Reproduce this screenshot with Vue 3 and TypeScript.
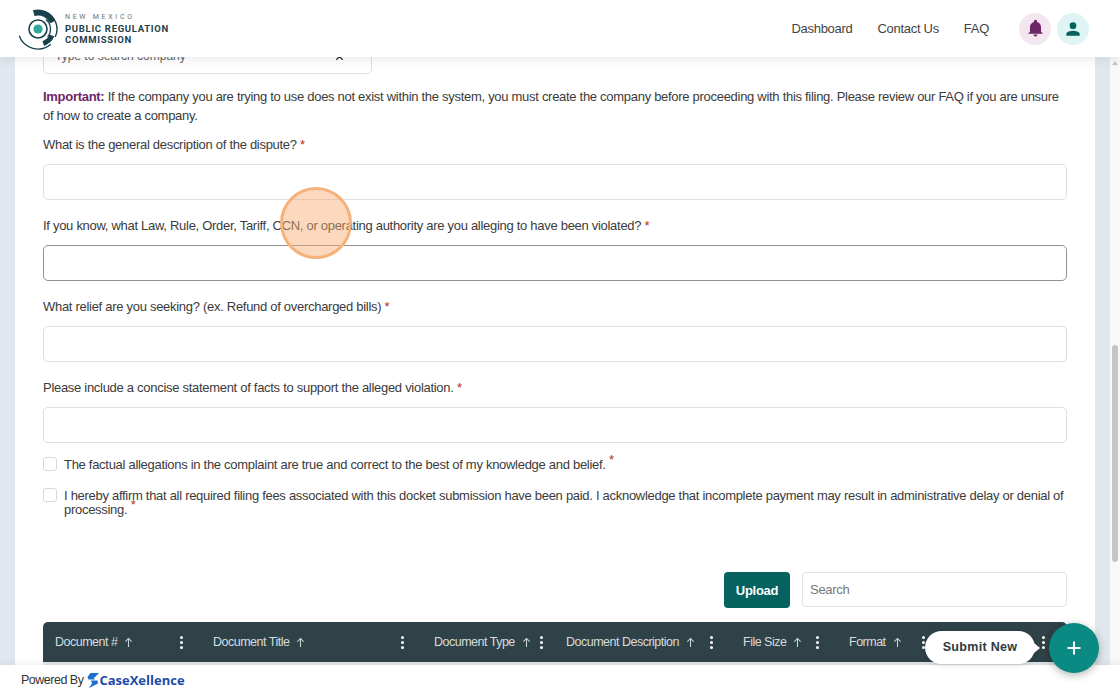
<template>
  <div class="shell">
    <header class="topbar">
      <div class="brand">
        <svg class="brand-mark" viewBox="0 0 44 44" width="44" height="44" fill="none" stroke="#17414b">
          <path d="M15.730 6.060A16.500 16.500 0 0 1 34.950 15.030" stroke-width="6" />
          <path d="M37.200 14A19 19 0 0 1 37.200 30" stroke-width="1.400" />
          <path d="M34.050 28.550A15.500 15.500 0 0 1 25.300 36.570" stroke-width="5" />
          <path d="M1.200 28.840A20 20 0 0 0 32.860 37.320" stroke-width="1.300" />
          <path d="M28 12.400A12.500 12.500 0 0 1 29.600 30" stroke-width="1.300" />
          <circle cx="20" cy="22" r="9" stroke-width="1.600" />
          <circle cx="20" cy="22" r="4.600" fill="#2fa89e" stroke="none" />
        </svg>
        <div class="brand-text">
          <span class="brand-state">NEW MEXICO</span>
          <span class="brand-name">PUBLIC REGULATION</span>
          <span class="brand-name">COMMISSION</span>
        </div>
      </div>
      <nav class="nav">
        <a v-for="link in navLinks" :key="link">{{ link }}</a>
      </nav>
      <div class="avatars">
        <span class="avatar bell">
          <svg viewBox="0 0 24 24" width="19" height="19" fill="#6d2667">
            <path d="M12 22a2.500 2.500 0 0 0 2.500-2.500h-5A2.500 2.500 0 0 0 12 22Zm7-6v-5.500c0-3.300-1.800-6-5-6.700V3a2 2 0 0 0-4 0v.8c-3.200.7-5 3.400-5 6.700V16l-2 2v.5h18V18Z" />
          </svg>
        </span>
        <span class="avatar user">
          <svg viewBox="0 0 24 24" width="20" height="20" fill="#05625f">
            <circle cx="12" cy="8" r="4" />
            <path d="M4 20v-2c0-2.700 5.300-4 8-4s8 1.300 8 4v2Z" />
          </svg>
        </span>
      </div>
    </header>

    <div class="body">
      <main class="page">
        <div class="card">
          <div class="company-select">
            <span>Type to search company</span>
            <svg viewBox="0 0 10 10" width="9" height="9" stroke="#333" stroke-width="1.500">
              <path d="M1.500 1.500l7 7M8.500 1.500l-7 7" />
            </svg>
          </div>

          <p class="notice">
            <strong>Important:</strong> If the company you are trying to use does not exist within the system, you must create the company before proceeding with this filing. Please review our FAQ if you are unsure of how to create a company.
          </p>

          <div v-for="field in fields" :key="field.label" class="field">
            <label>{{ field.label }} <em>*</em></label>
            <div class="text-input" :class="{ active: field.active }"></div>
          </div>

          <div class="check first">
            <span class="box"></span>
            <span>The factual allegations in the complaint are true and correct to the best of my knowledge and belief. <sup>*</sup></span>
          </div>
          <div class="check">
            <span class="box"></span>
            <span>I hereby affirm that all required filing fees associated with this docket submission have been paid. I acknowledge that incomplete payment may result in administrative delay or denial of processing. <sup>*</sup></span>
          </div>

          <div class="toolbar">
            <button class="upload">Upload</button>
            <div class="search">Search</div>
          </div>

          <div class="table-head">
            <div v-for="col in columns" :key="col.name" class="col" :class="col.cls">
              <span class="col-name">{{ col.name }}</span>
              <svg v-if="col.name" class="arrow" viewBox="0 0 10 12" width="9" height="11" fill="none" stroke="#c9d2d4" stroke-width="1.200">
                <path d="M5 11V1.500M1.500 5L5 1.500L8.500 5" />
              </svg>
              <span class="dots"><i></i><i></i><i></i></span>
            </div>
          </div>
          <div class="table-rows"></div>
        </div>
      </main>
      <div class="scrollbar">
        <span class="up"></span>
        <span class="thumb"></span>
        <span class="down"></span>
      </div>
    </div>

    <footer class="footer">
      <span>Powered By</span>
      <svg viewBox="0 0 12 15" width="12" height="15" fill="#1b6fd0">
        <path d="M3.500 0H12L7.500 4.500H6.500L8 6.500H1.500L0.500 4Z" />
        <path d="M4 7.500H10.500L11 10.500L2 15L5 10.500Z" />
      </svg>
      <strong>CaseXellence</strong>
    </footer>

    <div class="click-mark"></div>
    <div class="submit-tip">Submit New</div>
    <button class="fab">
      <svg viewBox="0 0 16 16" width="16" height="16" stroke="#fff" stroke-width="2">
        <path d="M8 1.500v13M1.500 8h13" />
      </svg>
    </button>
  </div>
</template>

<script setup lang="ts">
interface Field {
  label: string
  active?: boolean
}

interface Column {
  name: string
  cls?: string
}

const navLinks = ['Dashboard', 'Contact Us', 'FAQ']

const fields: Field[] = [
  { label: 'What is the general description of the dispute?' },
  { label: 'If you know, what Law, Rule, Order, Tariff, CCN, or operating authority are you alleging to have been violated?', active: true },
  { label: 'What relief are you seeking? (ex. Refund of overcharged bills)' },
  { label: 'Please include a concise statement of facts to support the alleged violation.' }
]

const columns: Column[] = [
  { name: 'Document #' },
  { name: 'Document Title' },
  { name: 'Document Type', cls: 'tight' },
  { name: 'Document Description' },
  { name: 'File Size' },
  { name: 'Format' },
  { name: '' }
]
</script>

<style>
html,
body {
  margin: 0;
  height: 100%;
  overflow: hidden;
}
</style>

<style scoped>
.shell {
  position: relative;
  display: flex;
  flex-direction: column;
  width: 1120px;
  height: 694px;
  overflow: hidden;
  background: #fff;
  font-family: "Liberation Sans", Arial, sans-serif;
  font-size: 13px;
  letter-spacing: -0.29px;
  color: #3b3b3b;
}

.topbar {
  position: relative;
  z-index: 3;
  flex: 0 0 57px;
  display: flex;
  align-items: center;
  padding: 0 31px 0 18px;
  background: #fff;
  box-shadow: 0 2px 10px rgba(40, 50, 70, 0.1);
}

.brand {
  display: flex;
  align-items: center;
  gap: 3px;
}

.brand-mark {
  margin-top: 1px;
}

.brand-text {
  display: flex;
  flex-direction: column;
  font-family: Roboto, sans-serif;
  line-height: 11px;
  letter-spacing: 0;
}

.brand-state {
  font-size: 7px;
  letter-spacing: 2.700px;
  color: #6a7377;
}

.brand-name {
  font-size: 9.500px;
  font-weight: 700;
  letter-spacing: 0.700px;
  color: #1d4049;
}

.nav {
  display: flex;
  gap: 25px;
  margin-left: auto;
  color: #444;
}

.avatars {
  display: flex;
  gap: 6px;
  margin-left: 30px;
}

.avatar {
  display: flex;
  align-items: center;
  justify-content: center;
  width: 32px;
  height: 32px;
  border-radius: 50%;
}

.bell {
  background: #f3e6f1;
}

.user {
  background: #dff5f5;
}

.body {
  flex: 1;
  display: flex;
  min-height: 0;
}

.page {
  flex: 1;
  min-width: 0;
  padding: 0 15px;
  background: #e2e7ef;
  overflow: hidden;
}

.card {
  height: calc(100% + 19px);
  margin-top: -19px;
  padding: 0 28px;
  background: #fff;
}

.company-select {
  display: flex;
  align-items: center;
  justify-content: space-between;
  box-sizing: border-box;
  width: 329px;
  height: 36px;
  padding: 0 27px 0 11px;
  border: 1px solid #dcdfe3;
  border-radius: 0 0 5px 5px;
  color: #666;
  font-size: 12px;
  letter-spacing: 0;
}

.notice {
  margin: 13px 0 0;
  line-height: 19px;
}

.notice strong {
  color: #6d2667;
}

.field {
  margin-top: 10px;
}

.field + .field {
  margin-top: 16px;
}

.field label {
  display: block;
  height: 19px;
  line-height: 19px;
}

.field em {
  color: #c0272d;
  font-style: normal;
}

.text-input {
  box-sizing: border-box;
  height: 36px;
  margin-top: 10px;
  border: 1px solid #dcdfe3;
  border-radius: 5px;
}

.text-input.active {
  border-color: #8d9296;
}

.check {
  display: flex;
  gap: 7px;
  margin-top: 16px;
  line-height: 14px;
}

.check.first {
  margin-top: 14px;
}

.check > span:last-child {
  padding-top: 1px;
}

.box {
  box-sizing: border-box;
  flex: 0 0 14px;
  height: 14px;
  border: 1px solid #d5d8dc;
  border-radius: 3px;
}

.check sup {
  color: #c0272d;
  font-size: 13px;
  line-height: 0;
}

.toolbar {
  display: flex;
  justify-content: flex-end;
  align-items: flex-start;
  gap: 12px;
  margin-top: 55px;
}

.upload {
  width: 66px;
  height: 36px;
  border: 0;
  border-radius: 4px;
  background: #05625f;
  color: #fff;
  font-family: inherit;
  font-size: 13px;
  font-weight: 700;
  letter-spacing: -0.3px;
}

.search {
  box-sizing: border-box;
  width: 265px;
  height: 35px;
  padding-left: 7px;
  line-height: 33px;
  border: 1px solid #dfe2e6;
  border-radius: 4px;
  color: #777;
}

.table-head {
  display: grid;
  grid-template-columns: 158px 221px 132px 177px 106px 106px 120px;
  height: 40px;
  margin-top: 14px;
  border-radius: 5px 5px 0 0;
  background: #2f4248;
  color: #d5dcde;
  font-size: 12.500px;
  letter-spacing: -0.5px;
}

.table-rows {
  height: 4px;
  background: #e3e7ea;
}

.col {
  display: flex;
  align-items: center;
  gap: 7px;
  padding: 0 18px 0 12px;
  position: relative;
}

.col.tight {
  padding-right: 11px;
}

.col-name {
  white-space: nowrap;
}

.arrow {
  flex: none;
}

.dots {
  display: flex;
  flex-direction: column;
  gap: 2px;
  margin-left: auto;
}

.dots i {
  width: 3px;
  height: 3px;
  border-radius: 50%;
  background: #fff;
}

.scrollbar {
  position: relative;
  flex: 0 0 10px;
  background: #f8f8f8;
}

.thumb {
  position: absolute;
  top: 288px;
  left: 2px;
  width: 6px;
  height: 217px;
  border-radius: 3px;
  background: #c5c5c5;
}

.up,
.down {
  position: absolute;
  left: 2px;
  width: 0;
  height: 0;
  border-left: 3px solid transparent;
  border-right: 3px solid transparent;
}

.up {
  top: 4px;
  border-bottom: 4px solid #c5c5c5;
}

.down {
  bottom: -25px;
  border-top: 4px solid #c5c5c5;
}

.footer {
  position: relative;
  z-index: 2;
  flex: 0 0 29px;
  box-sizing: border-box;
  display: flex;
  align-items: center;
  padding: 1px 0 0 21px;
  background: #fff;
  box-shadow: 0 -2px 6px rgba(40, 50, 70, 0.08);
  font-size: 12.500px;
  letter-spacing: -0.5px;
  color: #333;
}

.footer svg {
  margin-left: 4px;
}

.footer strong {
  font-family: "Open Sans", sans-serif;
  font-size: 13px;
  letter-spacing: 0;
  color: #1c4aa8;
}

.click-mark {
  position: absolute;
  left: 280px;
  top: 187px;
  box-sizing: border-box;
  width: 72px;
  height: 72px;
  border: 3px solid #f5b27a;
  border-radius: 50%;
  background: rgba(249, 170, 110, 0.45);
  z-index: 4;
}

.submit-tip {
  position: absolute;
  z-index: 4;
  left: 925px;
  top: 631px;
  width: 110px;
  height: 33px;
  line-height: 33px;
  text-align: center;
  border-radius: 17px;
  background: #fff;
  color: #2f3b40;
  font-size: 12.500px;
  font-weight: 700;
  letter-spacing: 0.300px;
  box-shadow: 0 1px 5px rgba(0, 0, 0, 0.15);
}

.submit-tip::after {
  content: "";
  position: absolute;
  right: -5px;
  top: 12px;
  border-left: 6px solid #fff;
  border-top: 5px solid transparent;
  border-bottom: 5px solid transparent;
}

.fab {
  position: absolute;
  z-index: 4;
  left: 1049px;
  top: 623px;
  display: flex;
  align-items: center;
  justify-content: center;
  width: 50px;
  height: 50px;
  padding: 0;
  border: 0;
  border-radius: 50%;
  background: #0b8a83;
  box-shadow: 0 2px 8px rgba(0, 0, 0, 0.3);
}
</style>
